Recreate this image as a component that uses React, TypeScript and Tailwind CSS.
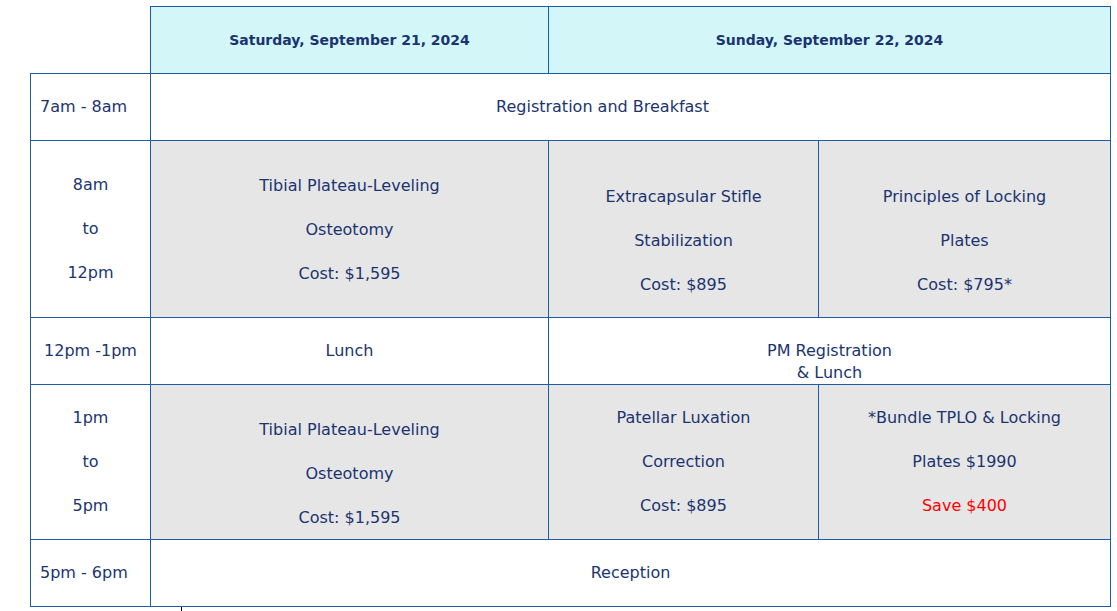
import React from 'react';

const line = 'border border-[#1f5ca6]';
const txt = 'text-[16px] text-[#1b3470]';

function Stack({ lines, className = '' }: { lines: React.ReactNode[]; className?: string }) {
  return (
    <div className={`flex flex-col items-center gap-[22px] leading-[22px] ${className}`}>
      {lines.map((l, i) => (
        <div key={i}>{l}</div>
      ))}
    </div>
  );
}

export default function App() {
  return (
    <div className="w-[1117px] h-[611px] bg-white pt-[6px] pl-[30px] font-['DejaVu_Sans',Verdana,sans-serif]">
      <table className={`border-collapse table-fixed ${txt}`}>
        <colgroup>
          <col className="w-[120px]" />
          <col className="w-[398px]" />
          <col className="w-[270px]" />
          <col className="w-[292px]" />
        </colgroup>
        <tbody>
          <tr className="h-[67px]">
            <td className="border-0" />
            <td className={`${line} bg-[#d3f7f9] text-center font-bold text-[14px] pt-[1px]`}>Saturday, September 21, 2024</td>
            <td colSpan={2} className={`${line} bg-[#d3f7f9] text-center font-bold text-[14px] pt-[1px]`}>
              Sunday, September 22, 2024
            </td>
          </tr>
          <tr className="h-[67px]">
            <td className={`${line} pl-[9px]`}>7am - 8am</td>
            <td colSpan={3} className={`${line} text-center pr-[56px]`}>Registration and Breakfast</td>
          </tr>
          <tr className="h-[177px]">
            <td className={`${line}`}>
              <Stack lines={['8am', 'to', '12pm']} />
            </td>
            <td className={`${line} bg-[#e6e6e6] align-top pt-[34px]`}>
              <Stack lines={['Tibial Plateau-Leveling', 'Osteotomy', 'Cost: $1,595']} />
            </td>
            <td className={`${line} bg-[#e6e6e6] align-top pt-[45px]`}>
              <Stack lines={['Extracapsular Stifle', 'Stabilization', 'Cost: $895']} />
            </td>
            <td className={`${line} bg-[#e6e6e6] align-top pt-[45px]`}>
              <Stack lines={['Principles of Locking', 'Plates', 'Cost: $795*']} />
            </td>
          </tr>
          <tr className="h-[67px]">
            <td className={`${line} text-center`}>12pm -1pm</td>
            <td className={`${line} text-center`}>Lunch</td>
            <td colSpan={2} className={`${line} text-center align-top pt-[22px] leading-[22px]`}>
              PM Registration
              <br />
              &amp; Lunch
            </td>
          </tr>
          <tr className="h-[155px]">
            <td className={`${line}`}>
              <Stack lines={['1pm', 'to', '5pm']} />
            </td>
            <td className={`${line} bg-[#e6e6e6] align-top pt-[34px]`}>
              <Stack lines={['Tibial Plateau-Leveling', 'Osteotomy', 'Cost: $1,595']} />
            </td>
            <td className={`${line} bg-[#e6e6e6]`}>
              <Stack lines={['Patellar Luxation', 'Correction', 'Cost: $895']} />
            </td>
            <td className={`${line} bg-[#e6e6e6]`}>
              <Stack lines={['*Bundle TPLO & Locking', 'Plates $1990', <span className="text-[#ff0000]">Save $400</span>]} />
            </td>
          </tr>
          <tr className="h-[67px]">
            <td className={`${line} pl-[9px]`}>5pm - 6pm</td>
            <td colSpan={3} className={`${line} text-center`}>Reception</td>
          </tr>
        </tbody>
      </table>
      <div className="ml-[151px] w-px h-[5px] bg-black" />
    </div>
  );
}
